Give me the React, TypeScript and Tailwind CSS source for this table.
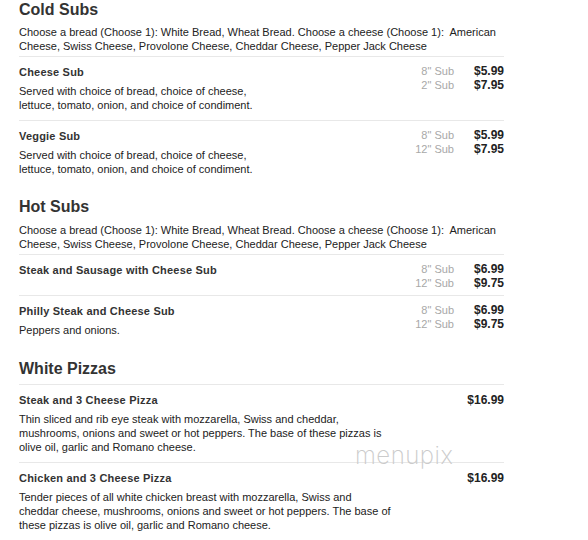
import React from "react";

type Size = { label: string; price: string };
type SubItem = { name: string; desc?: string[]; sizes: Size[] };
type PizzaItem = { name: string; price: string; desc: string[] };

const font = { fontFamily: '"Liberation Sans", Arial, sans-serif' };

function SectionTitle({ children, className = "" }: { children: React.ReactNode; className?: string }) {
  return <h2 className={`text-[16px] font-bold leading-[18px] text-[#333] ${className}`}>{children}</h2>;
}

function Lines({ lines, className = "" }: { lines: string[]; className?: string }) {
  return (
    <p className={`text-[11px] leading-[14px] text-[#222] ${className}`}>
      {lines.map((l, i) => (
        <React.Fragment key={i}>
          {l}
          {i < lines.length - 1 && <br />}
        </React.Fragment>
      ))}
    </p>
  );
}

function SubRow({ item }: { item: SubItem }) {
  return (
    <div className="flex border-t border-[#e8e8e8] pt-[8px] pb-[8px]">
      <div className="flex-1">
        <div className="text-[11px] font-bold leading-[14px] tracking-[0.2px] text-[#333]">{item.name}</div>
        {item.desc && <Lines lines={item.desc} className="mt-[5px]" />}
      </div>
      <div className="mb-[-3px] flex flex-col">
        {item.sizes.map((s) => (
          <div key={s.label + s.price} className="flex h-[13.5px] items-center">
            <span className="w-[60px] text-right text-[11px] leading-[13.5px] text-[#a8a8a8]">{s.label}</span>
            <span className="w-[50px] text-right text-[12px] font-bold leading-[13.5px] text-[#222]">{s.price}</span>
          </div>
        ))}
      </div>
    </div>
  );
}

function PizzaRow({ item }: { item: PizzaItem }) {
  return (
    <div className="border-t border-[#e8e8e8] pt-[8px] pb-[8px]">
      <div className="flex items-center justify-between">
        <div className="text-[11px] font-bold leading-[14px] tracking-[0.2px] text-[#333]">{item.name}</div>
        <div className="text-[12px] font-bold leading-[14px] text-[#222]">{item.price}</div>
      </div>
      <Lines lines={item.desc} className="mt-[5px]" />
    </div>
  );
}

const breadCheese = [
  "Choose a bread (Choose 1): White Bread, Wheat Bread. Choose a cheese (Choose 1):\u00a0 American",
  "Cheese, Swiss Cheese, Provolone Cheese, Cheddar Cheese, Pepper Jack Cheese",
];

const servedDesc = [
  "Served with choice of bread, choice of cheese,",
  "lettuce, tomato, onion, and choice of condiment.",
];

const coldSubs: SubItem[] = [
  {
    name: "Cheese Sub",
    desc: servedDesc,
    sizes: [
      { label: '8" Sub', price: "$5.99" },
      { label: '2" Sub', price: "$7.95" },
    ],
  },
  {
    name: "Veggie Sub",
    desc: servedDesc,
    sizes: [
      { label: '8" Sub', price: "$5.99" },
      { label: '12" Sub', price: "$7.95" },
    ],
  },
];

const hotSubs: SubItem[] = [
  {
    name: "Steak and Sausage with Cheese Sub",
    sizes: [
      { label: '8" Sub', price: "$6.99" },
      { label: '12" Sub', price: "$9.75" },
    ],
  },
  {
    name: "Philly Steak and Cheese Sub",
    desc: ["Peppers and onions."],
    sizes: [
      { label: '8" Sub', price: "$6.99" },
      { label: '12" Sub', price: "$9.75" },
    ],
  },
];

const pizzas: PizzaItem[] = [
  {
    name: "Steak and 3 Cheese Pizza",
    price: "$16.99",
    desc: [
      "Thin sliced and rib eye steak with mozzarella, Swiss and cheddar,",
      "mushrooms, onions and sweet or hot peppers. The base of these pizzas is",
      "olive oil, garlic and Romano cheese.",
    ],
  },
  {
    name: "Chicken and 3 Cheese Pizza",
    price: "$16.99",
    desc: [
      "Tender pieces of all white chicken breast with mozzarella, Swiss and",
      "cheddar cheese, mushrooms, onions and sweet or hot peppers. The base of",
      "these pizzas is olive oil, garlic and Romano cheese.",
    ],
  },
];

export default function App() {
  return (
    <div className="relative h-[540px] w-[588px] overflow-hidden bg-white" style={font}>
      <div className="ml-[19px] w-[485px] pt-[1px]">
        <section>
          <SectionTitle>Cold Subs</SectionTitle>
          <Lines lines={breadCheese} className="mt-[6px] mb-[3px]" />
          {coldSubs.map((it) => (
            <SubRow key={it.name} item={it} />
          ))}
        </section>
        <section className="mt-[14px]">
          <SectionTitle>Hot Subs</SectionTitle>
          <Lines lines={breadCheese} className="mt-[7px] mb-[3px]" />
          {hotSubs.map((it) => (
            <SubRow key={it.name} item={it} />
          ))}
        </section>
        <section className="mt-[15px]">
          <SectionTitle className="mb-[6px]">White Pizzas</SectionTitle>
          {pizzas.map((it) => (
            <PizzaRow key={it.name} item={it} />
          ))}
        </section>
      </div>
      <div
        className="pointer-events-none absolute left-[355px] top-[442px] text-[24px] font-extralight leading-[28px] tracking-[0.5px] text-[#cbcbcb]"
        style={{ fontFamily: "Inter, 'Open Sans', sans-serif" }}
      >
        menupix
      </div>
    </div>
  );
}
